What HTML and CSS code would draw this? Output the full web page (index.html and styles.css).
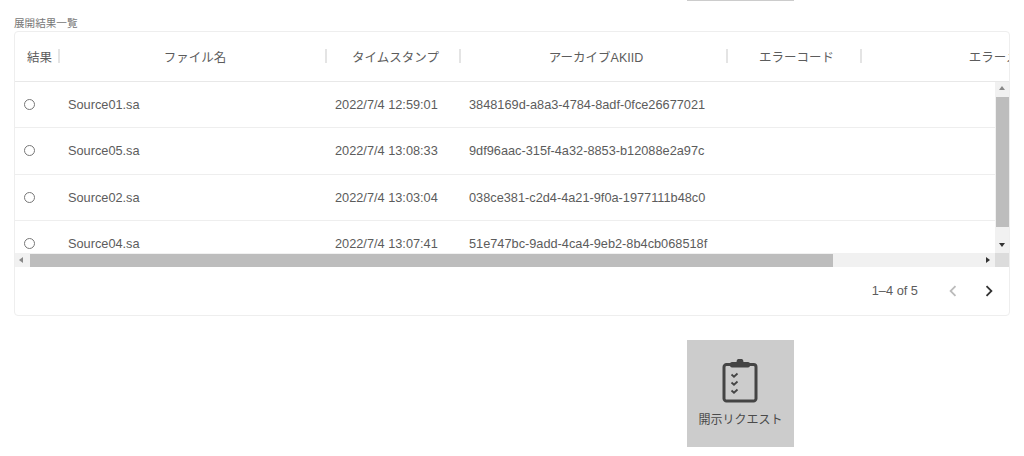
FILE: index.html
```html
<!DOCTYPE html>
<html lang="ja">
  <head>
    <meta charset="utf-8">
    <title>展開結果一覧</title>
    <link rel="stylesheet" href="styles.css">
  </head>
  <body>
    <div class="tile-edge"></div>

    <main class="panel">
      <p class="caption">展開結果一覧</p>

      <section class="card">
        <div class="grid-head">
          <div class="head-cell col-result"><span class="head-label head-left">結果</span><i class="sep"></i></div>
          <div class="head-cell col-name"><span class="head-label">ファイル名</span><i class="sep"></i></div>
          <div class="head-cell col-time"><span class="head-label">タイムスタンプ</span><i class="sep"></i></div>
          <div class="head-cell col-id"><span class="head-label">アーカイブAKIID</span><i class="sep"></i></div>
          <div class="head-cell col-code"><span class="head-label">エラーコード</span><i class="sep"></i></div>
          <div class="head-cell col-msg"><span class="head-label">エラーメッセージ</span></div>
        </div>

        <div class="grid-scroll">
          <div class="rows">
            <div class="row">
              <div class="col-result cell"><i class="status"></i></div>
              <div class="col-name cell">Source01.sa</div>
              <div class="col-time cell">2022/7/4 12:59:01</div>
              <div class="col-id cell">3848169d-a8a3-4784-8adf-0fce26677021</div>
            </div>
            <div class="row">
              <div class="col-result cell"><i class="status"></i></div>
              <div class="col-name cell">Source05.sa</div>
              <div class="col-time cell">2022/7/4 13:08:33</div>
              <div class="col-id cell">9df96aac-315f-4a32-8853-b12088e2a97c</div>
            </div>
            <div class="row">
              <div class="col-result cell"><i class="status"></i></div>
              <div class="col-name cell">Source02.sa</div>
              <div class="col-time cell">2022/7/4 13:03:04</div>
              <div class="col-id cell">038ce381-c2d4-4a21-9f0a-1977111b48c0</div>
            </div>
            <div class="row">
              <div class="col-result cell"><i class="status"></i></div>
              <div class="col-name cell">Source04.sa</div>
              <div class="col-time cell">2022/7/4 13:07:41</div>
              <div class="col-id cell">51e747bc-9add-4ca4-9eb2-8b4cb068518f</div>
            </div>
          </div>

          <div class="vbar">
            <i class="arrow arrow-up"></i>
            <i class="vthumb"></i>
            <i class="arrow arrow-down"></i>
          </div>

          <div class="hbar">
            <i class="arrow arrow-left"></i>
            <i class="hthumb"></i>
            <i class="arrow arrow-right"></i>
          </div>

          <div class="corner"></div>
        </div>

        <div class="pager">
          <span class="pager-count">1–4 of 5</span>
          <svg class="pager-btn is-off" viewBox="0 0 24 24"><path d="M15.41 7.41 14 6l-6 6 6 6 1.41-1.41L10.83 12z"/></svg>
          <svg class="pager-btn" viewBox="0 0 24 24"><path d="M10 6 8.59 7.41 13.17 12l-4.58 4.59L10 18l6-6z"/></svg>
        </div>
      </section>

      <div class="actions">
        <button class="tile" type="button">
          <svg class="tile-icon" viewBox="0 0 36 44">
            <path class="clip-board" d="M10 5.500H4.500A2.500 2.500 0 0 0 2 8V39.500A2.500 2.500 0 0 0 4.500 42H31.500A2.500 2.500 0 0 0 34 39.500V8A2.500 2.500 0 0 0 31.500 5.500H26"/>
            <path class="clip-top" d="M10 3H14.500A3.500 3.500 0 0 1 21.500 3H26A2 2 0 0 1 28 5V6.500A2 2 0 0 1 26 8.500H10A2 2 0 0 1 8 6.500V5A2 2 0 0 1 10 3Z"/>
            <path class="clip-check" d="M9.500 15.500 12 17.700 15.500 14.500M9.500 23.500 12 25.700 15.500 22.500M9.500 31.500 12 33.700 15.500 30.500"/>
          </svg>
          <span class="tile-label">開示リクエスト</span>
        </button>
      </div>
    </main>
  </body>
</html>
```

FILE: styles.css
```css
html {
  box-sizing: border-box;
}

*,
*:before,
*:after {
  box-sizing: inherit;
}

body {
  margin: 0;
  background: #fff;
  color: #5c5c5c;
  font-family: "Liberation Sans", "Noto Sans CJK JP", sans-serif;
  font-size: 12.75px;
}

.tile-edge {
  width: 107px;
  height: 1px;
  margin-left: 687px;
  background: #ccc;
}

.panel {
  padding: 0 14px;
}

.caption {
  margin: 0;
  padding-top: 15px;
  height: 30px;
  font-size: 10.6px;
  line-height: 14px;
  color: #777;
}

.card {
  width: 996px;
  height: 285px;
  border: 1px solid #eee;
  border-radius: 4px;
  overflow: hidden;
}

.grid-head {
  display: flex;
  height: 50px;
  border-bottom: 1px solid #e8e8e8;
  font-size: 12.5px;
  overflow: hidden;
}

.head-cell {
  display: flex;
  flex: none;
  align-items: center;
  padding-left: 5px;
  padding-bottom: 1px;
}

.head-label {
  flex: 1;
  text-align: center;
  white-space: nowrap;
}

.head-left {
  padding-left: 7px;
  text-align: left;
}

.sep {
  flex: none;
  width: 2px;
  height: 14px;
  background: #e4e4e4;
}

.col-result { width: 45px; }
.col-name { width: 267px; }
.col-time { width: 134px; }
.col-id { width: 267px; }
.col-code { width: 134px; }
.col-msg { width: 308px; }

.grid-scroll {
  display: grid;
  grid-template-columns: 980px 14px;
  grid-template-rows: 171px 14px;
}

.rows {
  overflow: hidden;
}

.row {
  display: flex;
  height: 46.3px;
  border-bottom: 1px solid #eee;
}

.cell {
  display: flex;
  flex: none;
  align-items: center;
  padding-left: 8px;
  white-space: nowrap;
}

.status {
  width: 11px;
  height: 11px;
  margin-left: 1px;
  border: 1px solid #777;
  border-radius: 50%;
}

.vbar,
.hbar,
.corner {
  display: flex;
  align-items: center;
  background: #f1f1f1;
}

.vbar {
  flex-direction: column;
}

.corner {
  background: #dcdcdc;
}

.arrow {
  flex: none;
  width: 0;
  height: 0;
  border: 3px solid transparent;
}

.arrow-up {
  margin-top: 4px;
  border-top-width: 0;
  border-bottom: 4px solid #888;
}

.arrow-down {
  margin-top: auto;
  margin-bottom: 6px;
  border-bottom-width: 0;
  border-top: 4px solid #333;
}

.arrow-left {
  margin-left: 4px;
  border-left-width: 0;
  border-right: 4px solid #888;
}

.arrow-right {
  margin-left: auto;
  margin-right: 5px;
  border-right-width: 0;
  border-left: 4px solid #333;
}

.vthumb {
  flex: none;
  width: 13px;
  height: 130px;
  margin-top: 7px;
  background: #bdbdbd;
}

.hthumb {
  flex: none;
  width: 803px;
  height: 13px;
  margin-left: 7px;
  background: #bdbdbd;
}

.pager {
  display: flex;
  align-items: center;
  justify-content: flex-end;
  height: 47px;
  padding-right: 9px;
}

.pager-count {
  margin-right: 24px;
  font-size: 12.8px;
}

.pager-btn {
  width: 22px;
  height: 22px;
  fill: #333;
}

.pager-btn.is-off {
  margin-right: 14px;
  fill: #bbb;
}

.actions {
  padding: 24px 0 0 673px;
}

.tile {
  display: flex;
  flex-direction: column;
  align-items: center;
  width: 107px;
  height: 107px;
  padding: 19px 0 0;
  border: 0;
  background: #ccc;
  color: #4a4a4a;
  font: inherit;
  font-size: 12px;
}

.tile-icon {
  width: 36px;
  height: 44px;
  margin-right: 2px;
}

.clip-board {
  fill: none;
  stroke: #444;
  stroke-width: 3;
}

.clip-top {
  fill: #444;
}

.clip-check {
  fill: none;
  stroke: #444;
  stroke-width: 1.8;
}

.tile-label {
  margin-top: 7px;
  white-space: nowrap;
}
```
